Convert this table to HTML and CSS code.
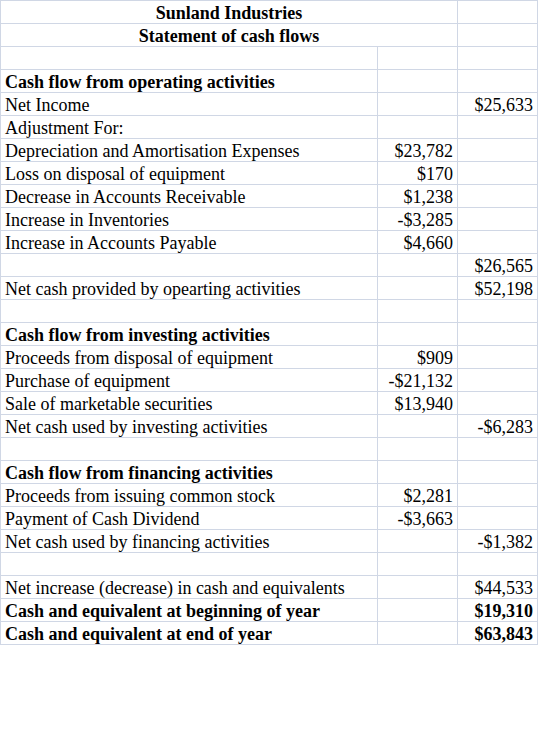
FILE: index.html
```html
<!DOCTYPE html>
<html lang="en">
<head>
    <meta charset="UTF-8">
    <title>Statement of cash flows</title>
    <link rel="stylesheet" href="styles.css">
</head>
<body>
    <table class="sheet">
        <colgroup>
            <col class="c-label">
            <col class="c-num">
            <col class="c-num">
        </colgroup>
        <tr class="b"><td colspan="2" class="title">Sunland Industries</td><td></td></tr>
        <tr class="b"><td colspan="2" class="title">Statement of cash flows</td><td></td></tr>
        <tr><td></td><td></td><td></td></tr>
        <tr class="b"><td>Cash flow from operating activities</td><td></td><td></td></tr>
        <tr><td>Net Income</td><td></td><td class="n">$25,633</td></tr>
        <tr><td>Adjustment For:</td><td></td><td></td></tr>
        <tr><td>Depreciation and Amortisation Expenses</td><td class="n">$23,782</td><td></td></tr>
        <tr><td>Loss on disposal of equipment</td><td class="n">$170</td><td></td></tr>
        <tr><td>Decrease in Accounts Receivable</td><td class="n">$1,238</td><td></td></tr>
        <tr><td>Increase in Inventories</td><td class="n">-$3,285</td><td></td></tr>
        <tr><td>Increase in Accounts Payable</td><td class="n">$4,660</td><td></td></tr>
        <tr><td></td><td></td><td class="n">$26,565</td></tr>
        <tr><td>Net cash provided by opearting activities</td><td></td><td class="n">$52,198</td></tr>
        <tr><td></td><td></td><td></td></tr>
        <tr class="b"><td>Cash flow from investing activities</td><td></td><td></td></tr>
        <tr><td>Proceeds from disposal of equipment</td><td class="n">$909</td><td></td></tr>
        <tr><td>Purchase of equipment</td><td class="n">-$21,132</td><td></td></tr>
        <tr><td>Sale of marketable securities</td><td class="n">$13,940</td><td></td></tr>
        <tr><td>Net cash used by investing activities</td><td></td><td class="n">-$6,283</td></tr>
        <tr><td></td><td></td><td></td></tr>
        <tr class="b"><td>Cash flow from financing activities</td><td></td><td></td></tr>
        <tr><td>Proceeds from issuing common stock</td><td class="n">$2,281</td><td></td></tr>
        <tr><td>Payment of Cash Dividend</td><td class="n">-$3,663</td><td></td></tr>
        <tr><td>Net cash used by financing activities</td><td></td><td class="n">-$1,382</td></tr>
        <tr><td></td><td></td><td></td></tr>
        <tr><td>Net increase (decrease) in cash and equivalents</td><td></td><td class="n">$44,533</td></tr>
        <tr class="b"><td>Cash and equivalent at beginning of year</td><td></td><td class="n">$19,310</td></tr>
        <tr class="b"><td>Cash and equivalent at end of year</td><td></td><td class="n">$63,843</td></tr>
    </table>
</body>
</html>
```

FILE: styles.css
```css
body{
    margin: 0;
    background: #fff;
}
.sheet{
    border-collapse: collapse;
    table-layout: fixed;
    width: 538px;
    font-family: "Liberation Serif", "Times New Roman", serif;
    font-size: 18px;
    color: #000;
}
.c-label{
    width: 377px;
}
.c-num{
    width: 80px;
}
.sheet tr{
    height: 23px;
}
.sheet td{
    border: 1px solid #d0d7e5;
    padding: 0 4px;
    line-height: 20px;
    white-space: nowrap;
    overflow: hidden;
    vertical-align: bottom;
}
.sheet .b td{
    font-weight: bold;
}
.sheet .title{
    text-align: center;
}
.sheet .n{
    text-align: right;
}
```
